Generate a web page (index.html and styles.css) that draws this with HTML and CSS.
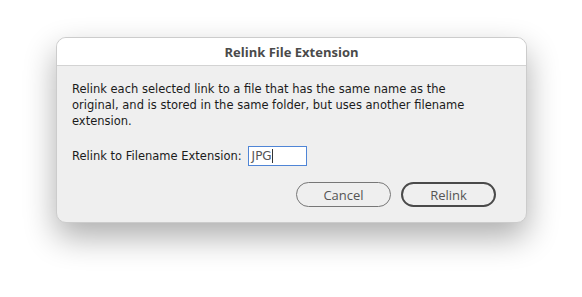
FILE: index.html
```html
<!DOCTYPE html>
<html>
<head>
    <title>Relink File Extension</title>
    <meta name="viewport" content="width=device-width, initial-scale=1.0">
    <link rel="stylesheet" href="styles.css">
</head>
<body>
    <div class="dialog">
        <div class="titlebar">Relink File Extension</div>
        <div class="content">
            <p class="message">Relink each selected link to a file that has the same name as the original, and is stored in the same folder, but uses another filename extension.</p>
            <div class="row">
                <label for="ext">Relink to Filename Extension:</label>
                <span class="field" id="ext">JPG<span class="caret"></span></span>
            </div>
            <div class="buttons">
                <button class="btn">Cancel</button>
                <button class="btn default">Relink</button>
            </div>
        </div>
    </div>
</body>
</html>
```

FILE: styles.css
```css
html {
    height: 100%;
}

body {
    font-family: "Open Sans", "DejaVu Sans", sans-serif;
    background-color: #ffffff;
    margin: 0;
    padding: 37px 0 0 56px;
    min-height: 100%;
    box-sizing: border-box;
}

.dialog {
    width: 471px;
    height: 186px;
    box-sizing: border-box;
    background-color: #efefef;
    border: 1px solid #cccccc;
    border-radius: 10px;
    overflow: hidden;
    box-shadow: 0 14px 32px rgba(0, 0, 0, 0.32);
}

.titlebar {
    height: 27px;
    line-height: 28px;
    background-color: #ffffff;
    border-bottom: 1px solid #d3d3d3;
    text-align: center;
    font-size: 13px;
    font-weight: bold;
    color: #4a4a4a;
}

.content {
    padding: 15px 15px 0 15px;
    font-family: "DejaVu Sans", sans-serif;
    font-size: 11.5px;
    color: #1b1b1b;
}

.message {
    margin: 0;
    padding-right: 20px;
    line-height: 16px;
}

.row {
    display: flex;
    align-items: center;
    gap: 6px;
    margin-top: 17px;
}

.field {
    display: flex;
    align-items: center;
    width: 59px;
    height: 20px;
    box-sizing: border-box;
    padding-left: 3px;
    background-color: #ffffff;
    border: 1px solid #4f85d6;
    color: #555555;
    font-size: 12px;
}

.caret {
    display: inline-block;
    width: 1px;
    height: 14px;
    background-color: #333333;
}

.buttons {
    display: flex;
    justify-content: flex-end;
    gap: 10px;
    margin-top: 16px;
    padding-right: 15px;
}

.btn {
    width: 95px;
    height: 25px;
    font-family: "Open Sans", sans-serif;
    font-size: 13px;
    color: #555555;
    background-color: transparent;
    border: 1px solid #777777;
    border-radius: 13px;
    padding: 0;
}

.btn.default {
    border: 2px solid #4a4a4a;
}
```
